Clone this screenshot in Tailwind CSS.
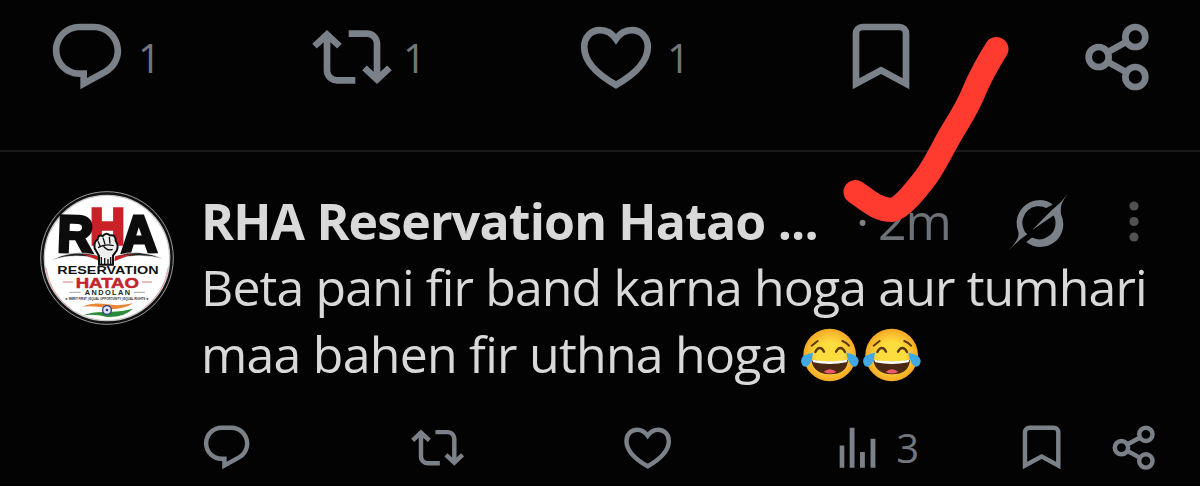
<!DOCTYPE html>
<html lang="en">
<head>
<meta charset="utf-8">
<title>Post replies</title>
<script src="https://cdn.jsdelivr.net/npm/@tailwindcss/browser@4"></script>
</head>
<body class="bg-[#030303]">
<svg class="hidden">
  <symbol id="reply" viewBox="0 0 24 24"><path fill="currentColor" d="M1.751 10c0-4.42 3.584-8 8.005-8h4.366c4.49 0 8.129 3.64 8.129 8.13 0 2.96-1.607 5.68-4.196 7.11l-8.054 4.46v-3.69h-.067c-4.49.1-8.183-3.51-8.183-8.01zm8.005-6c-3.317 0-6.005 2.69-6.005 6 0 3.37 2.77 6.08 6.138 6.01l.351-.01h1.761v2.3l5.087-2.81c1.951-1.08 3.163-3.13 3.163-5.36 0-3.39-2.744-6.13-6.129-6.13H9.756z"/></symbol>
  <symbol id="repost" viewBox="0 0 24 24"><path fill="currentColor" d="M4.5 3.88l4.432 4.14-1.364 1.46L5.5 7.55V16c0 1.1.896 2 2 2H13v2H7.5c-2.209 0-4-1.79-4-4V7.55L1.432 9.48.068 8.02 4.5 3.88zM16.5 6H11V4h5.5c2.209 0 4 1.79 4 4v8.45l2.068-1.93 1.364 1.46-4.432 4.14-4.432-4.14 1.364-1.46 2.068 1.93V8c0-1.1-.896-2-2-2z"/></symbol>
  <symbol id="like" viewBox="0 0 24 24"><path fill="none" stroke="currentColor" stroke-width="2" d="M12 6.6C10.7 4.8 8.9 3.96 7.26 3.96C4.4 3.96 2.46 6.15 2.46 9C2.46 13.05 6.2 17.1 12 20.4C17.8 17.1 21.54 13.05 21.54 9C21.54 6.15 19.6 3.96 16.74 3.96C15.1 3.96 13.3 4.8 12 6.6Z"/></symbol>
  <symbol id="save" viewBox="0 0 24 24"><path fill="currentColor" fill-rule="evenodd" d="M3.5 21.7V5a3 3 0 0 1 3-3h11a3 3 0 0 1 3 3v16.7L12 17.1zM5.5 18.35l6.5-3.5 6.5 3.5V5a1 1 0 0 0-1-1h-11a1 1 0 0 0-1 1z"/></symbol>
  <symbol id="share" viewBox="0 0 24 24"><g fill="none" stroke="currentColor" stroke-width="2"><circle cx="6.5" cy="12" r="3"/><circle cx="17.5" cy="6" r="3"/><circle cx="17.5" cy="18" r="3"/><path d="M9.1 10.6l5.8-3.2M9.1 13.4l5.8 3.2"/></g></symbol>
  <symbol id="views" viewBox="0 0 24 24"><path fill="currentColor" d="M3 11h2.1v10H3zM7.5 3h2.2v18H7.500zM12.15 14h2.2v7h-2.2zM16.900 8h2.2v13h-2.2z"/></symbol>
  <symbol id="joy" viewBox="30 38 180 162">
    <circle cx="119" cy="119" r="79" fill="url(#face)"/>
    <g fill="none" stroke="#5b3a10" stroke-width="7" stroke-linecap="round"><path d="M65 91Q75 83 83 77M157 77Q169 81 177 91" stroke-width="6"/><path d="M76 110Q82 97 90 98Q97 98 102 109M138 109Q144 98 151 98Q159 98 165 110"/></g>
    <path d="M64 133Q119 145 174 133Q172 176 119 177Q69 175 64 133Z" fill="#4b2813"/>
    <path d="M66 133Q119 143 172 133Q172 137 169 141Q119 151 70 141Z" fill="#fff"/>
    <path d="M101 169Q119 154 139 169Q119 180 101 169Z" fill="#ee5a6c"/>
    <path d="M69 112Q34 117 33 136Q34 154 48 154Q65 149 69 112Z" fill="#40a9e4"/>
    <path d="M169 112Q204 117 206 136Q205 154 191 154Q175 149 169 112Z" fill="#40a9e4"/>
  </symbol>
</svg>
<svg class="absolute size-0"><defs><radialGradient id="face"><stop offset=".5" stop-color="#fddd3e"/><stop offset="1" stop-color="#f5a825"/></radialGradient></defs></svg>

<main class="relative flex h-[486px] w-[1200px] flex-col overflow-hidden border-b-2 border-black text-[#7b8189]" style="font-family:'Open Sans','Noto Sans',sans-serif">
  <section class="flex h-[152px] shrink-0 border-b-2 border-[#191a1b] pt-[17px] pl-[47px]">
    <div class="flex w-[265px]"><svg class="size-20"><use href="#reply"/></svg><span class="ml-[11px] text-[40px] leading-[81px] font-normal text-[#72777f]">1</span></div>
    <div class="flex w-[264px]"><svg class="size-20"><use href="#repost"/></svg><span class="ml-[11px] text-[40px] leading-[81px] font-normal text-[#72777f]">1</span></div>
    <div class="flex w-[265px]"><svg class="size-20"><use href="#like"/></svg><span class="ml-[11px] text-[40px] leading-[81px] font-normal text-[#72777f]">1</span></div>
    <div class="w-[236px]"><svg class="size-20"><use href="#save"/></svg></div>
    <svg class="size-20"><use href="#share"/></svg>
  </section>

  <article class="flex pl-[40px]">
    <svg class="mt-[39px] size-[134px] shrink-0" viewBox="30 34 402 402" font-family="Liberation Sans" font-weight="700" text-anchor="middle">
      <circle cx="231" cy="235" r="199" fill="#111" stroke="#999" stroke-width="3"/>
      <circle cx="231" cy="235" r="188" fill="#fff" stroke="#c8c8c8" stroke-width="4"/>
      <path d="M48 265A187 187 0 0 0 120 386M414 265A187 187 0 0 1 342 386" fill="none" stroke="#e9a5a5" stroke-width="3"/>
      <g text-anchor="start" stroke-width="10">
        <text x="180" y="193" font-size="148" fill="#c92128" stroke="#c92128" textLength="105" lengthAdjust="spacingAndGlyphs">H</text>
        <text x="80" y="216" font-size="156" fill="#0c0c0c" stroke="#0c0c0c" textLength="108" lengthAdjust="spacingAndGlyphs" transform="rotate(2 84 217)">R</text>
        <text x="274" y="218" font-size="156" fill="#0c0c0c" stroke="#0c0c0c" textLength="108" lengthAdjust="spacingAndGlyphs" transform="rotate(-1 272 219)">A</text>
      </g>
      <path d="M62 242Q130 205 208 229L211 240Q140 217 62 242ZM400 238Q330 204 256 229L253 240Q325 217 400 238Z" fill="#222" stroke="#fff" stroke-width="2"/>
      <path d="M155 222L208 230L211 245ZM309 222L256 230L253 245Z" fill="#c92128"/>
      <path d="M194 206Q191 185 203 180Q203 164 218 169Q230 157 239 167Q258 164 257 184Q267 197 260 213L249 228V255H207V229Z" fill="#eee" stroke="#111" stroke-width="6"/>
      <path d="M204 185l8 18M219 174l6 20M238 172l2 20M204 204Q224 191 251 198M220 199q12 16 28 10M214 232v22M224 235v20M234 238v17M242 232v22" fill="none" stroke="#111" stroke-width="4"/>
      <text x="234" y="282" font-size="35" fill="#111" textLength="304" lengthAdjust="spacingAndGlyphs">RESERVATION</text>
      <text x="232" y="324" font-size="46" fill="#c4232a" stroke="#c4232a" stroke-width="1.500" textLength="190" lengthAdjust="spacingAndGlyphs">HATAO</text>
      <path d="M99 307h30M336 307h30" stroke="#d27676" stroke-width="3"/>
      <text x="232" y="346" font-size="22" fill="#222" textLength="136">ANDOLAN</text>
      <path d="M118 338h34M311 338h34" stroke="#777" stroke-width="2"/>
      <text x="231" y="361" font-size="9" fill="#333" textLength="252">★ MERIT FIRST | EQUAL OPPORTUNITY | EQUAL RIGHTS ★</text>
      <path d="M158 381Q190 366 231 374Q270 380 309 371Q286 388 240 389Q200 376 158 381Z" fill="#e98535"/>
      <path d="M158 407Q190 395 231 397Q270 398 309 387Q282 414 231 412Q195 402 158 407Z" fill="#2c8b3a"/>
      <circle cx="231" cy="391" r="13" fill="#dfe4f3" stroke="#2c3f86" stroke-width="4"/><circle cx="231" cy="391" r="4" fill="#2c3f86"/>
    </svg>
    <div class="ml-[27px] pt-[35.500px] text-[50px] leading-[66.7px] whitespace-nowrap text-[#d9d9d9]">
      <header class="flex h-[66.7px]">
        <h2 class="w-[655px] font-bold tracking-[-0.84px]">RHA Reservation Hatao ...</h2>
        <span class="w-[22px] text-[#7b8189]">·</span>
        <span class="w-[129px] font-normal tracking-[-1px] text-[#6d7279]">2m</span>
        <svg class="mt-[3px] h-[62px] w-[64px] text-[#7b8189]" viewBox="80 30 190 185" fill="currentColor"><path d="M85 207C98 191 119 172 113 150A68 68 0 0 1 216 70L197 81A49 49 0 0 0 129 143Q132 155 140 159Q110 180 85 207ZM262 38C250 54 236 68 241 100A68 68 0 0 1 137 182L154 169A49 49 0 0 0 224 120C223 112 221 107 218 103L154 147L212 88Q240 66 262 38Z"/></svg>
        <svg class="mt-px ml-[57px] h-[62px] w-[12px] text-[#505154]" viewBox="0 0 12 62" fill="currentColor"><circle cx="6" cy="17" r="4.600"/><circle cx="6" cy="32.500" r="4.600"/><circle cx="6" cy="48" r="4.600"/></svg>
      </header>
      <p class="tracking-[-0.88px]">Beta pani fir band karna hoga aur tumhari</p>
      <p class="flex tracking-[-0.75px]">maa bahen fir uthna hoga<svg class="mt-[7px] ml-[12.500px] h-[54px] w-[60px]"><use href="#joy"/></svg><svg class="mt-[7px] ml-[2px] h-[54px] w-[60px]"><use href="#joy"/></svg></p>
    </div>
  </article>

  <footer class="mt-[33px] flex pl-[200px]">
    <div class="w-[211px]"><svg class="size-[53.3px]"><use href="#reply"/></svg></div>
    <div class="w-[210px]"><svg class="size-[53.3px]"><use href="#repost"/></svg></div>
    <div class="w-[212px]"><svg class="size-[53.3px]"><use href="#like"/></svg></div>
    <div class="flex w-[181.5px]"><svg class="size-[53.3px]"><use href="#views"/></svg><span class="ml-[10px] text-[40px] leading-[54px] font-normal text-[#72777f]">3</span></div>
    <div class="w-[92px]"><svg class="size-[53.3px]"><use href="#save"/></svg></div>
    <svg class="size-[53.3px]"><use href="#share"/></svg>
  </footer>

  <svg class="absolute inset-0 h-[486px] w-[1200px]" fill="none" stroke="#ff3b30" stroke-width="24" stroke-linecap="round" stroke-linejoin="round"><path d="M855.500 192C866 199 877 210 892 210C902 208 916 190 926 177C936 163 943 147 952 132C959 120 966 110 972 96C979 79 985 67 996.500 49"/></svg>
</main>
</body>
</html>
